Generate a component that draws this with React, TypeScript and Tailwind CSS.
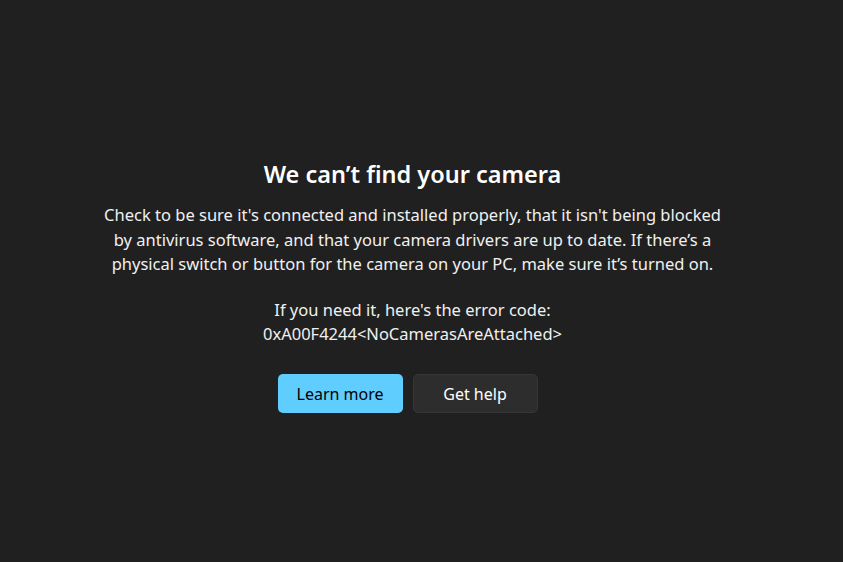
export default function App() {
  return (
    <div
      className="flex h-[562px] w-[843px] flex-col items-center bg-[#202020] pr-[18px] text-white"
      style={{ fontFamily: '"Noto Sans", "Open Sans", sans-serif' }}
    >
      <div className="mt-[157px] flex flex-col items-center">
        <h1 className="text-[23.5px] font-semibold leading-[34px]">We can’t find your camera</h1>
        <p className="mt-[12px] text-center text-[16.5px] leading-[24.5px] text-[#f0f0f0]">
          Check to be sure it's connected and installed properly, that it isn't being blocked
          <br />
          by antivirus software, and that your camera drivers are up to date. If there’s a
          <br />
          physical switch or button for the camera on your PC, make sure it’s turned on.
        </p>
        <p className="mt-[21px] text-center text-[16.5px] leading-[24px] text-[#f0f0f0]">
          If you need it, here's the error code:
          <br />
          0xA00F4244&lt;NoCamerasAreAttached&gt;
        </p>
        <div className="mt-[28px] mr-[10px] flex gap-[10px]">
          <button className="h-[39px] w-[125px] rounded-[5px] bg-[#60cdff] pt-[1px] text-[16px] text-black">
            Learn more
          </button>
          <button className="h-[39px] w-[125px] rounded-[5px] border border-[#363636] bg-[#2d2d2d] pt-[1px] text-[16px] text-white">
            Get help
          </button>
        </div>
      </div>
    </div>
  )
}
